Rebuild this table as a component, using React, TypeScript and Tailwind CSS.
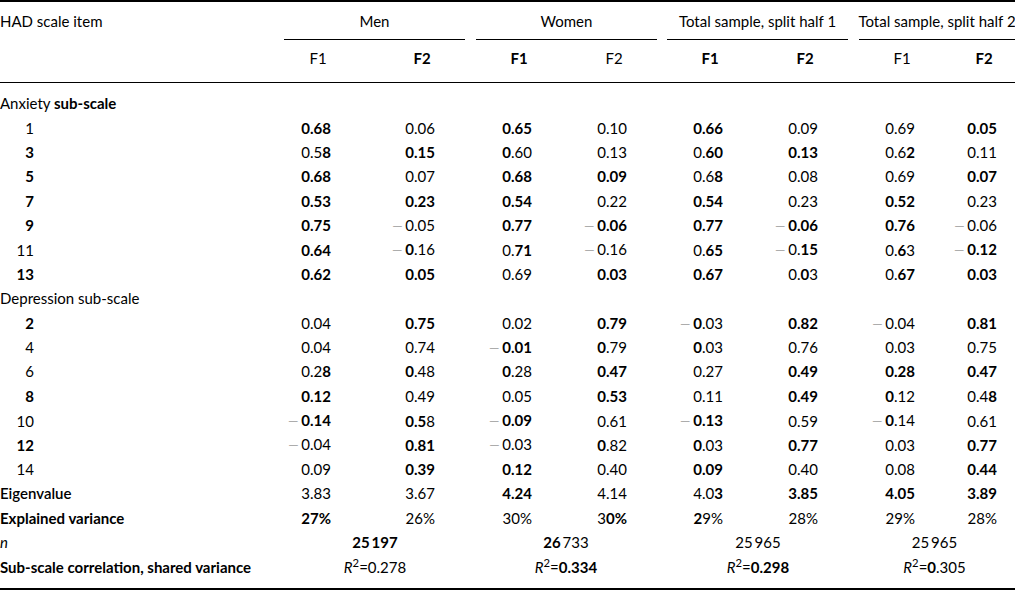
import React from "react";

const GRID =
  "grid grid-cols-[280px_94px_96px_96px_96px_96px_96px_86px_75px]";

const PR = [
  "pr-[43px]",
  "pr-[35px]",
  "pr-[34px]",
  "pr-[35px]",
  "pr-[35px]",
  "pr-[36px]",
  "pr-[25px]",
  "pr-[18px]",
];

function Rich({ s }: { s: string }) {
  let minus = false;
  let str = s;
  if (str.startsWith("-")) {
    minus = true;
    str = str.slice(1);
  }
  const parts = str.split("*");
  return (
    <>
      {minus && (
        <span className="font-['DejaVu_Sans',sans-serif] text-[14px] font-extralight text-[#9a9a9a] mr-[2px]">
          −
        </span>
      )}
      {parts.map((p, i) =>
        p === "" ? null : (
          <span key={i} className={i % 2 === 1 ? "font-bold" : "font-normal"}>
            {p}
          </span>
        )
      )}
    </>
  );
}

type Row =
  | { kind: "section"; label: string }
  | { kind: "item"; item: string; vals: string[] }
  | { kind: "stat"; label: string; vals: string[] };

const rows: Row[] = [
  { kind: "section", label: "Anxiety *sub-scale*" },
  { kind: "item", item: "1", vals: ["*0.68*", "0.06", "*0.65*", "0.10", "*0.66*", "0.09", "0.69", "*0.05*"] },
  { kind: "item", item: "*3*", vals: ["0.5*8*", "*0.15*", "*0*.60", "0.13", "0.*60*", "*0.13*", "0.6*2*", "0.11"] },
  { kind: "item", item: "*5*", vals: ["*0.68*", "0.07", "*0.68*", "*0.09*", "0.6*8*", "0.08", "0.69", "*0.07*"] },
  { kind: "item", item: "*7*", vals: ["*0.53*", "*0.23*", "*0.54*", "0.22", "*0.54*", "0.23", "*0.52*", "0.23"] },
  { kind: "item", item: "*9*", vals: ["*0.75*", "-0.05", "*0.77*", "-*0.06*", "*0.77*", "-*0.06*", "*0.76*", "-0.06"] },
  { kind: "item", item: "11", vals: ["*0.64*", "-*0*.16", "0.*71*", "-0.16", "0.*65*", "-0.*15*", "0.*6*3", "-*0.12*"] },
  { kind: "item", item: "*13*", vals: ["*0.62*", "*0.05*", "0.69", "*0.03*", "*0.67*", "0.*0*3", "0.*67*", "*0.03*"] },
  { kind: "section", label: "Depression sub-scale" },
  { kind: "item", item: "*2*", vals: ["0.04", "*0.75*", "0.02", "*0.79*", "-*0*.03", "*0.82*", "-0.04", "*0.81*"] },
  { kind: "item", item: "4", vals: ["0.04", "0.74", "-*0.01*", "*0*.79", "*0*.03", "0.76", "0.03", "0.75"] },
  { kind: "item", item: "6", vals: ["0.2*8*", "*0*.48", "*0*.28", "*0.47*", "0.27", "*0.49*", "*0.28*", "*0.47*"] },
  { kind: "item", item: "*8*", vals: ["*0.12*", "0.49", "0.05", "*0.53*", "0.11", "*0.49*", "*0*.12", "0.4*8*"] },
  { kind: "item", item: "10", vals: ["-*0.14*", "*0.5*8", "-*0.09*", "0.61", "-*0.13*", "0.59", "-*0*.14", "0.61"] },
  { kind: "item", item: "*12*", vals: ["-0.04", "*0.81*", "-0.03", "*0*.82", "*0*.03", "*0.77*", "0.03", "*0.77*"] },
  { kind: "item", item: "14", vals: ["0.09", "*0.39*", "*0.12*", "0.40", "*0.09*", "0.40", "0.08", "*0.44*"] },
  { kind: "stat", label: "Eigenvalue", vals: ["3.83", "3.67", "*4.24*", "4.14", "4.0*3*", "*3.85*", "*4.05*", "*3.89*"] },
  { kind: "stat", label: "*Explained variance*", vals: ["*27%*", "26%", "30%", "3*0%*", "*2*9%", "28%", "29%", "28%"] },
];

const groups = [
  { name: "Men", line: "ml-[4px] mr-[5px]" },
  { name: "Women", line: "ml-[6px] mr-[5px]" },
  { name: "Total sample, split half 1", line: "ml-[5px] mr-[6px]" },
  { name: "Total sample, split half 2", line: "ml-[5px] mr-0" },
];

const fHeads = ["F1", "*F2*", "*F1*", "F2", "*F1*", "*F2*", "F1", "*F2*"];

const nVals = ["*25\u2009197*", "*26*\u2009733", "25\u2009965", "25\u2009965"];
const rVals = ["0.278", "*0.334*", "*0.298*", "*0*.305"];

export default function App() {
  return (
    <div className="w-[1015px] h-[594px] bg-white text-black font-['Lato','Noto_Sans',sans-serif] text-[15px] leading-[24px]">
      <div className="border-t-2 border-b-2 border-black">
        {/* group header row */}
        <div className={`${GRID} h-[38px]`}>
          <div className="flex items-center">HAD scale item</div>
          {groups.map((g) => (
            <div key={g.name} className="col-span-2 h-full">
              <div
                className={`${g.line} h-full border-b border-black flex items-center justify-center whitespace-nowrap`}
              >
                {g.name}
              </div>
            </div>
          ))}
        </div>
        {/* F header row */}
        <div className={`${GRID} h-[43px] pt-[6px] border-b border-black`}>
          <div />
          {fHeads.map((f, i) => (
            <div key={i} className={`text-right ${PR[i]}`}>
              <span className="inline-block w-[26px] text-center">
                <Rich s={f} />
              </span>
            </div>
          ))}
        </div>
        {/* body */}
        <div className="pt-[8px] pb-[9px]">
          {rows.map((r, ri) => {
            if (r.kind === "section") {
              return (
                <div key={ri} className={`${GRID} h-[24.4px] items-center`}>
                  <div className="whitespace-nowrap">
                    <Rich s={r.label} />
                  </div>
                </div>
              );
            }
            return (
              <div key={ri} className={`${GRID} h-[24.4px] items-center`}>
                {r.kind === "item" ? (
                  <div>
                    <span className="inline-block w-[34px] text-right">
                      <Rich s={r.item} />
                    </span>
                  </div>
                ) : (
                  <div className="whitespace-nowrap">
                    {r.label === "Eigenvalue" ? (
                      <span className="font-semibold">Eigenvalue</span>
                    ) : (
                      <Rich s={r.label} />
                    )}
                  </div>
                )}
                {r.vals.map((v, i) => (
                  <div key={i} className={`text-right whitespace-nowrap ${PR[i]}`}>
                    <Rich s={v} />
                  </div>
                ))}
              </div>
            );
          })}
          {/* n row */}
          <div className={`${GRID} h-[24.4px] items-center`}>
            <div className="italic">n</div>
            {nVals.map((v, i) => (
              <div key={i} className="col-span-2 text-center whitespace-nowrap">
                <Rich s={v} />
              </div>
            ))}
          </div>
          {/* R2 row */}
          <div className={`${GRID} h-[24.4px] items-center`}>
            <div className="font-bold whitespace-nowrap">
              Sub-scale correlation, shared variance
            </div>
            {rVals.map((v, i) => (
              <div key={i} className="col-span-2 text-center whitespace-nowrap">
                <i>R</i>
                <sup>2</sup>=<Rich s={v} />
              </div>
            ))}
          </div>
        </div>
      </div>
    </div>
  );
}
